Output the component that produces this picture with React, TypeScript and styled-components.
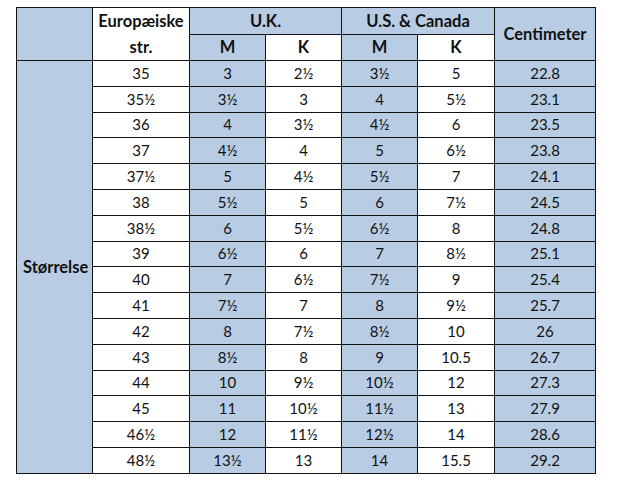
import styled, { createGlobalStyle } from 'styled-components';

const GlobalStyle = createGlobalStyle`
  html, body {
    margin: 0;
    padding: 0;
    background: #ffffff;
  }
`;

const BLUE = '#b8cce4';
const LINE = '#111111';

const Page = styled.div`
  padding: 7px 0 0 16px;
  font-family: Lato, 'Open Sans', sans-serif;
  color: #111;
`;

const Table = styled.table`
  border-collapse: collapse;
  table-layout: fixed;
  width: 579px;
  font-size: 15px;
`;

const Row = styled.tr<{ $h?: number }>`
  height: ${({ $h = 25.8 }) => $h}px;
`;

const Cell = styled.td<{ $blue?: boolean }>`
  border: 1px solid ${LINE};
  padding: 0;
  text-align: center;
  vertical-align: middle;
  background: ${({ $blue }) => ($blue ? BLUE : '#ffffff')};
  font-weight: 400;
  line-height: 1;
`;

const HeadCell = styled(Cell).attrs({ as: 'th' })`
  font-weight: 700;
  font-size: 16.5px;
`;

const StackedLabel = styled.div`
  display: flex;
  flex-direction: column;
  line-height: 26px;
`;

const SideLabel = styled(Cell)`
  text-align: left;
  padding-left: 6px;
  font-weight: 700;
  font-size: 16.5px;
`;

type SizeRow = [string, string, string, string, string, string];

const rows: SizeRow[] = [
  ['35', '3', '2½', '3½', '5', '22.8'],
  ['35½', '3½', '3', '4', '5½', '23.1'],
  ['36', '4', '3½', '4½', '6', '23.5'],
  ['37', '4½', '4', '5', '6½', '23.8'],
  ['37½', '5', '4½', '5½', '7', '24.1'],
  ['38', '5½', '5', '6', '7½', '24.5'],
  ['38½', '6', '5½', '6½', '8', '24.8'],
  ['39', '6½', '6', '7', '8½', '25.1'],
  ['40', '7', '6½', '7½', '9', '25.4'],
  ['41', '7½', '7', '8', '9½', '25.7'],
  ['42', '8', '7½', '8½', '10', '26'],
  ['43', '8½', '8', '9', '10.5', '26.7'],
  ['44', '10', '9½', '10½', '12', '27.3'],
  ['45', '11', '10½', '11½', '13', '27.9'],
  ['46½', '12', '11½', '12½', '14', '28.6'],
  ['48½', '13½', '13', '14', '15.5', '29.2'],
];

// EU, UK M, UK K, US M, US K, cm — which ones sit on the blue band
const blueCols = [false, true, false, true, false, true];

export default function App() {
  return (
    <Page>
      <GlobalStyle />
      <Table>
        <colgroup>
          <col style={{ width: 76 }} />
          <col style={{ width: 97 }} />
          <col style={{ width: 76 }} />
          <col style={{ width: 76 }} />
          <col style={{ width: 76 }} />
          <col style={{ width: 77 }} />
          <col style={{ width: 101 }} />
        </colgroup>
        <thead>
          <Row $h={26}>
            <HeadCell rowSpan={2} $blue />
            <HeadCell rowSpan={2}>
              <StackedLabel>
                <span>Europæiske</span>
                <span>str.</span>
              </StackedLabel>
            </HeadCell>
            <HeadCell colSpan={2} $blue>U.K.</HeadCell>
            <HeadCell colSpan={2} $blue>U.S. &amp; Canada</HeadCell>
            <HeadCell rowSpan={2} $blue>Centimeter</HeadCell>
          </Row>
          <Row $h={26}>
            <HeadCell $blue>M</HeadCell>
            <HeadCell>K</HeadCell>
            <HeadCell $blue>M</HeadCell>
            <HeadCell>K</HeadCell>
          </Row>
        </thead>
        <tbody>
          {rows.map((r, i) => (
            <Row key={r[0]}>
              {i === 0 && (
                <SideLabel as="th" rowSpan={rows.length} $blue>
                  Størrelse
                </SideLabel>
              )}
              {r.map((v, j) => (
                <Cell key={j} $blue={blueCols[j]}>
                  {v}
                </Cell>
              ))}
            </Row>
          ))}
        </tbody>
      </Table>
    </Page>
  );
}
